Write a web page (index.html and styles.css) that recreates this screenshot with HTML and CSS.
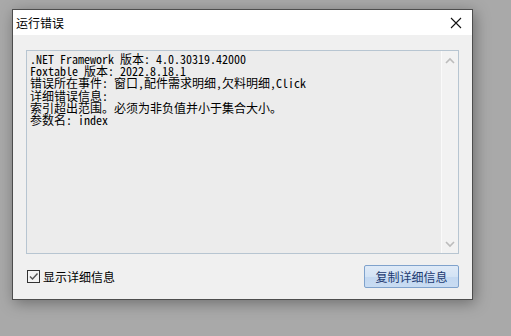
FILE: index.html
```html
<!DOCTYPE html>
<html lang="zh-CN">
<head>
    <meta charset="UTF-8">
    <title>运行错误</title>
    <link rel="stylesheet" href="styles.css">
</head>
<body>
    <div class="dialog">
        <div class="title-bar">
            <span class="title">运行错误</span>
            <svg class="close" width="12" height="12" viewBox="0 0 12 12">
                <path d="M1 1 L11 11 M11 1 L1 11" stroke="#111" stroke-width="1.1" fill="none"/>
            </svg>
        </div>
        <div class="dialog-body">
            <div class="detail-box">
                <pre class="detail-text">.NET Framework 版本: 4.0.30319.42000
Foxtable 版本: 2022.8.18.1
错误所在事件: 窗口,配件需求明细,欠料明细,Click
详细错误信息:
索引超出范围。必须为非负值并小于集合大小。
参数名: index</pre>
                <div class="scrollbar">
                    <svg width="10" height="7" viewBox="0 0 10 7"><path d="M1 6 L5 2 L9 6" stroke="#bcbcbc" stroke-width="1.6" fill="none"/></svg>
                    <svg width="10" height="7" viewBox="0 0 10 7"><path d="M1 1 L5 5 L9 1" stroke="#bcbcbc" stroke-width="1.6" fill="none"/></svg>
                </div>
            </div>
            <div class="footer">
                <label class="check">
                    <span class="check-box">
                        <svg width="11" height="11" viewBox="0 0 11 11"><path d="M2 5.5 L4.5 8 L9.5 2.5" stroke="#555" stroke-width="1.4" fill="none"/></svg>
                    </span>
                    显示详细信息
                </label>
                <button class="copy-btn">复制详细信息</button>
            </div>
        </div>
    </div>
</body>
</html>
```

FILE: styles.css
```css
* {
    box-sizing: border-box;
    margin: 0;
    padding: 0;
}

body {
    background: #a9a9a9;
    font-family: "Noto Sans CJK SC", "Liberation Sans", sans-serif;
    font-size: 12px;
    width: 511px;
    height: 336px;
    overflow: hidden;
}

.dialog {
    margin: 9px 0 0 12px;
    width: 461px;
    height: 291px;
    border: 1px solid #4d4d4d;
    background: #f0f0f0;
    box-shadow: 2px 3px 14px rgba(0, 0, 0, 0.35);
    display: flex;
    flex-direction: column;
}

.title-bar {
    height: 25px;
    background: #fff;
    display: flex;
    align-items: center;
    justify-content: space-between;
    padding: 0 10px 0 3px;
}

.title {
    color: #000;
    font-size: 12px;
}

.close {
    display: block;
}

.dialog-body {
    flex: 1;
    padding: 15px 13px 0 13px;
}

.detail-box {
    height: 204px;
    border: 1px solid #b7c5d1;
    background: #ececec;
    display: flex;
}

.detail-text {
    flex: 1;
    padding: 2px 3px 0;
    font-family: "Noto Sans Mono CJK SC", "Liberation Mono", monospace;
    font-size: 12px;
    line-height: 12.2px;
    color: #000;
    white-space: pre;
}

.scrollbar {
    width: 17px;
    background: #f2f2f2;
    border-left: 1px solid #fafafa;
    display: flex;
    flex-direction: column;
    justify-content: space-between;
    align-items: center;
    padding: 6px 0 5px;
}

.scrollbar svg {
    display: block;
}

.footer {
    display: flex;
    justify-content: space-between;
    align-items: center;
    margin-top: 11px;
}

.check {
    display: flex;
    align-items: center;
    gap: 3px;
    color: #000;
    font-size: 12px;
    padding-left: 1px;
}

.check-box {
    width: 13px;
    height: 13px;
    border: 1px solid #333;
    background: #f4f4f4;
    display: flex;
    align-items: center;
    justify-content: center;
}

.copy-btn {
    width: 95px;
    height: 23px;
    border: 1px solid #7fa2cc;
    border-radius: 2px;
    background: linear-gradient(#dfeaf7 0%, #d3e3f5 50%, #c3d8f1 51%, #c9dcf2 100%);
    color: #1d3b72;
    font-family: "Noto Sans CJK SC", "Liberation Sans", sans-serif;
    font-size: 12px;
}
```
